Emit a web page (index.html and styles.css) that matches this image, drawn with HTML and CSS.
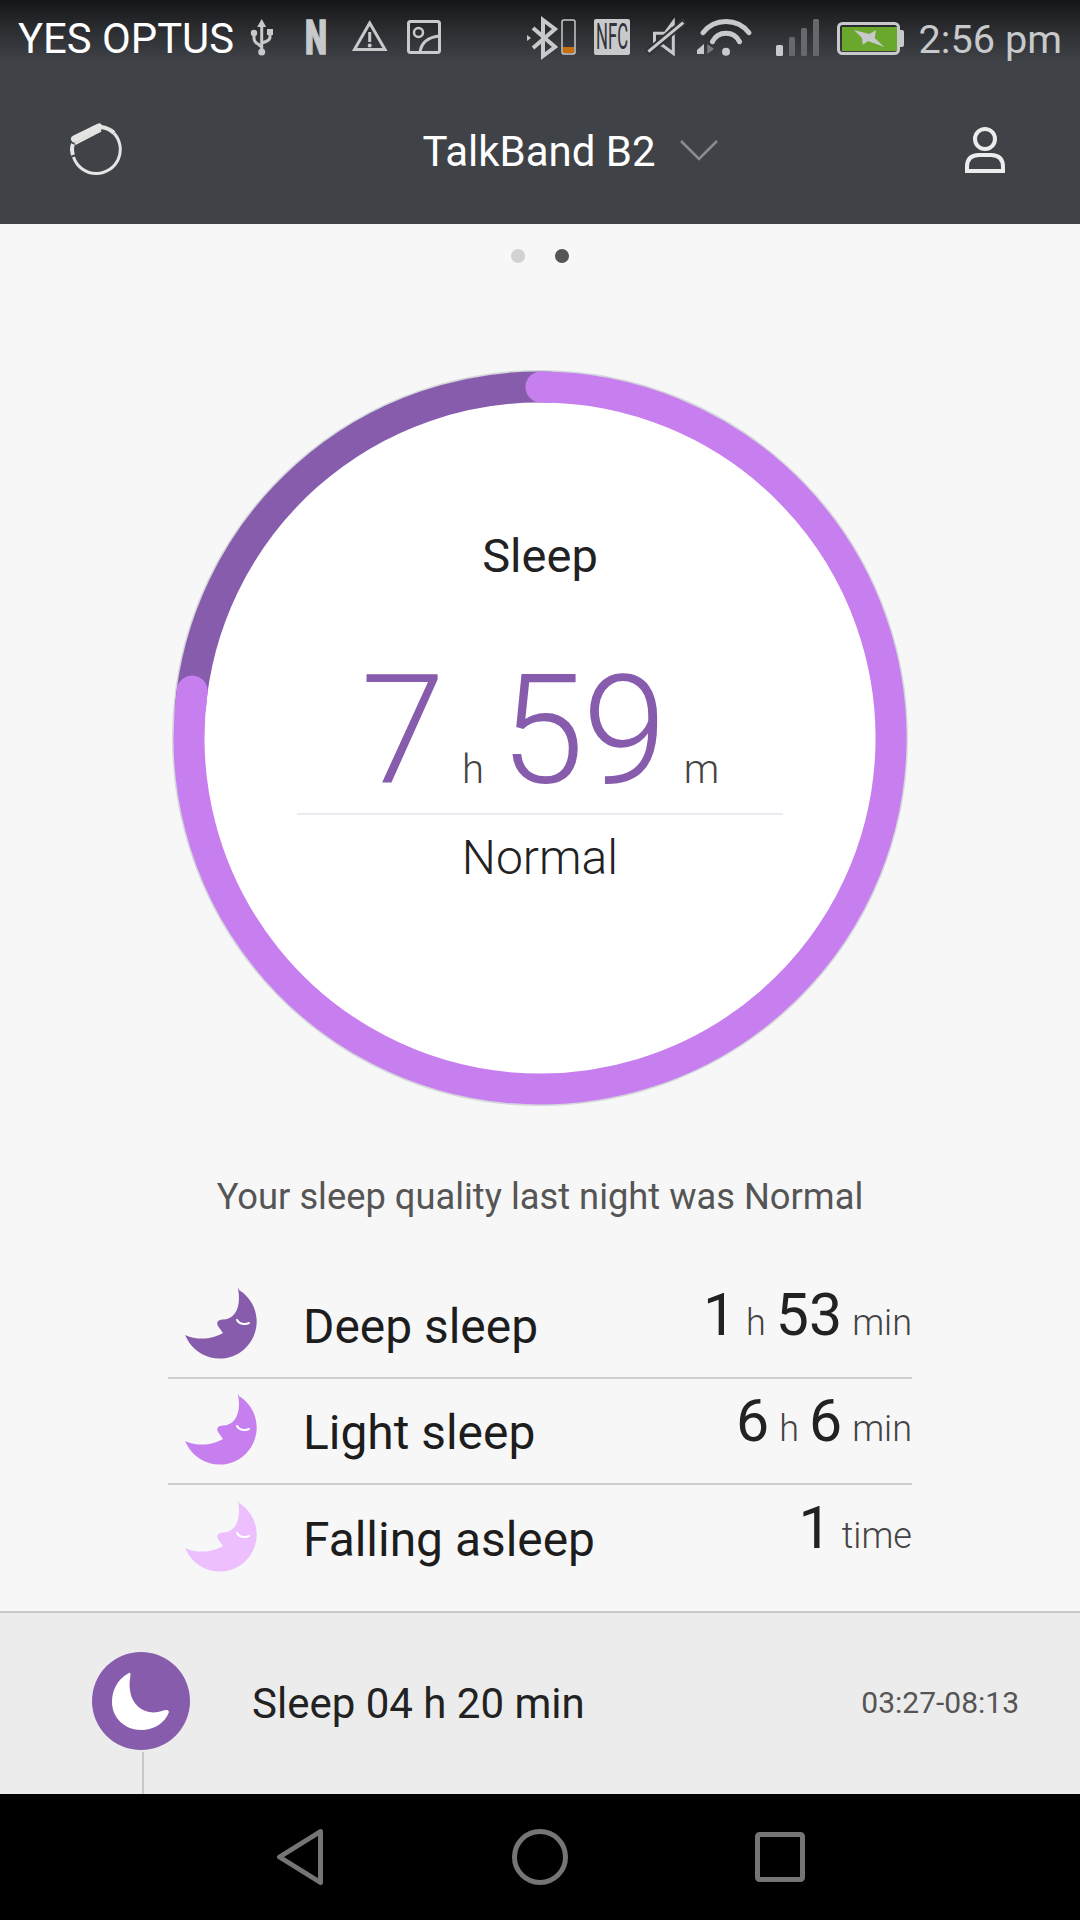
FILE: index.html
```html
<!DOCTYPE html>
<html lang="en">
<head>
<meta charset="utf-8">
<title>TalkBand B2</title>
<link rel="stylesheet" href="styles.css">
</head>
<body>
<div class="screen">
  <header class="header">
    <div class="statusbar">
      <div class="status-left">
        <span class="carrier">YES OPTUS</span>
        <svg class="ic ic-usb" width="22" height="40" viewBox="0 0 22 40"><path class="f" d="M10.700 1l4.500 8h-9z"/><path class="s3" d="M10.700 8v26M3 15v5q0 4 4 6l3.700 3M19 14v5q0 3-4 4.500l-4.300 1.500"/><circle class="f" cx="10.700" cy="34" r="3.500"/><circle class="f" cx="3" cy="15" r="3.200"/><rect class="f" x="16" y="11" width="6" height="6"/></svg>
        <svg class="ic ic-n" width="22" height="40" viewBox="0 0 22 40"><text class="glyph-n" x="0" y="36" textLength="22" lengthAdjust="spacingAndGlyphs">N</text></svg>
        <svg class="ic ic-warn" width="36" height="40" viewBox="0 0 36 40"><path class="s3" d="M17.700 5L2.500 31.500H33z"/><path class="s3" d="M17.700 14v10"/><circle class="f" cx="17.700" cy="27.500" r="2"/></svg>
        <svg class="ic ic-photo" width="34" height="40" viewBox="0 0 34 40"><rect class="s3" x="1.500" y="3.500" width="31" height="31" rx="2"/><circle class="s2" cx="11.500" cy="14.500" r="4.500"/><path class="s3" d="M13 34q2-14 19-16"/></svg>
      </div>
      <div class="status-right">
        <svg class="ic" width="32" height="40" viewBox="0 0 32 40"><path class="s4" d="M6 10l22 19-12 9V2l12 9L6 30"/><path class="f" d="M0 17l4 3-4 3z"/></svg>
        <svg class="ic ic-minibat" width="15" height="40" viewBox="0 0 15 40"><rect class="s1" x="1" y="2" width="13" height="34" rx="2"/><rect class="orange" x="2" y="29" width="11" height="6"/></svg>
        <svg class="ic ic-nfc" width="36" height="40" viewBox="0 0 36 40"><rect class="f" x="0" y="1" width="36" height="36" rx="2"/><text class="glyph-nfc" x="2" y="31" textLength="32" lengthAdjust="spacingAndGlyphs">NFC</text></svg>
        <svg class="ic ic-mute" width="36" height="40" viewBox="0 0 36 40"><path class="s3" d="M25.300 4L17 15.300H6.500V27h7.500l11.300 8.500z"/><path class="mute-cut" d="M-1 35L37 3"/><path class="s3" d="M0.300 33.700L35.300 4.700"/></svg>
        <svg class="ic ic-wifi" width="54" height="40" viewBox="0 0 54 40"><path class="s5" d="M6 14.700A29.300 29.300 0 0 1 52 14.700M15.500 23.700A15 15 0 0 1 42.500 23.700"/><circle class="f" cx="29" cy="33.700" r="4"/><path class="f" d="M7 26v10H0v-4z"/><path class="dim2" d="M10.300 26L17 31l-6.700 5z"/></svg>
        <svg class="ic ic-signal" width="43" height="40" viewBox="0 0 43 40"><rect class="f" x="0" y="27" width="7" height="11" rx="1.500"/><rect class="dim" x="13" y="19" width="6" height="19" rx="1.500"/><rect class="dim" x="25" y="10" width="6" height="28" rx="1.500"/><rect class="dim" x="37" y="1" width="6" height="37" rx="1.500"/></svg>
        <svg class="ic ic-bat" width="68" height="40" viewBox="0 0 68 40"><rect class="s3" x="1.500" y="5.500" width="60" height="30" rx="4"/><rect class="green" x="5" y="9" width="55" height="24"/><path class="f" d="M63 12h2q2 0 2 2v13q0 2-2 2h-2z"/><path class="f" d="M17 12L32.300 16 39 12 37.700 20 47.300 29 31 23 25.700 26.700 25 20z"/></svg>
        <span class="clock">2:56 pm</span>
      </div>
    </div>
    <div class="toolbar">
      <svg class="band-icon" width="52" height="52" viewBox="0 0 52 52"><path class="band-ring" d="M43.850 10.140A24 24 0 0 1 26.300 50.500A24 24 0 0 1 3.500 34"/><path class="band-line" d="M5 21L31 7.500"/><path class="band-top" d="M4.500 16L29 4"/><path class="band-end" d="M3 21Q1 26 3 32M31 4Q39 5 44 10"/></svg>
      <span class="device-name">TalkBand B2</span>
      <div class="toolbar-right">
        <svg class="chevron" width="38" height="22" viewBox="0 0 38 22"><path d="M1 2l18 18L37 2"/></svg>
        <svg class="user-icon" width="40" height="46" viewBox="0 0 40 46"><circle cx="20" cy="12" r="10"/><path d="M2 44v-4q0-12 12-12h12q12 0 12 12v4z"/></svg>
      </div>
    </div>
  </header>

  <main class="main">
    <div class="pager"><i class="dot"></i><i class="dot dot-on"></i></div>

    <section class="gauge">
      <svg class="gauge-art" width="736" height="736" viewBox="0 0 736 736">
        <circle class="g-edge" cx="368" cy="368" r="367"/>
        <path class="g-deep" d="M18.100 340A351 351 0 0 1 380 17.200"/>
        <path class="g-light" d="M369 17A351 351 0 1 1 20.200 321"/>
      </svg>
      <div class="gauge-body">
        <div class="gauge-title">Sleep</div>
        <div class="gauge-value">
          <span class="big">7</span><span class="unit unit-h">h</span><span class="big big-m">59</span><span class="unit unit-m">m</span>
        </div>
        <div class="gauge-state">Normal</div>
      </div>
    </section>

    <p class="quality">Your sleep quality last night was Normal</p>

    <ul class="stats">
      <li class="stat">
        <svg class="moon moon-deep" width="72" height="72" viewBox="0 0 72 72"><path d="M52.700 0.300L54 3A37 37 0 1 1 0.200 48C13 54 28 52 38 46L33 39C31 35 33 33 37 32.500C50 33 57 20 52.700 0.300Z"/><path class="eye" d="M52 33C54 37 60 38 64 36"/></svg>
        <span class="stat-name">Deep sleep</span>
        <span class="stat-val"><b>1</b><em>h</em><b>53</b><em>min</em></span>
      </li>
      <li class="stat">
        <svg class="moon moon-light" width="72" height="72" viewBox="0 0 72 72"><path d="M52.700 0.300L54 3A37 37 0 1 1 0.200 48C13 54 28 52 38 46L33 39C31 35 33 33 37 32.500C50 33 57 20 52.700 0.300Z"/><path class="eye" d="M52 33C54 37 60 38 64 36"/></svg>
        <span class="stat-name">Light sleep</span>
        <span class="stat-val"><b>6</b><em>h</em><b>6</b><em>min</em></span>
      </li>
      <li class="stat">
        <svg class="moon moon-fall" width="72" height="72" viewBox="0 0 72 72"><path d="M52.700 0.300L54 3A37 37 0 1 1 0.200 48C13 54 28 52 38 46L33 39C31 35 33 33 37 32.500C50 33 57 20 52.700 0.300Z"/><path class="eye" d="M52 33C54 37 60 38 64 36"/></svg>
        <span class="stat-name">Falling asleep</span>
        <span class="stat-val"><b>1</b><em>time</em></span>
      </li>
    </ul>
  </main>

  <section class="history">
    <div class="timeline">
      <svg class="avatar" width="98" height="98" viewBox="0 0 98 98"><circle class="av-bg" cx="49" cy="49" r="49"/><path class="av-moon" d="M37 21C24 28 20 40 20 50C20 66 33 78 49 78C62 78 73 71 77 60C76 57 73 58 70 59C55 64 40 55 38 38C37 32 38 27 38.500 23C38.500 21 38 20.500 37 21Z"/></svg>
      <i class="timeline-line"></i>
    </div>
    <span class="history-title">Sleep 04 h 20 min</span>
    <span class="history-time">03:27-08:13</span>
  </section>

  <nav class="navbar">
    <div class="nav-cell"><svg width="46" height="56" viewBox="0 0 46 56"><path d="M43.500 2.500L2.500 28l41 25.500z"/></svg></div>
    <div class="nav-cell"><svg width="56" height="56" viewBox="0 0 56 56"><circle cx="28" cy="28" r="25.500"/></svg></div>
    <div class="nav-cell"><svg width="50" height="50" viewBox="0 0 50 50"><rect x="2.500" y="2.500" width="45" height="45" rx="2"/></svg></div>
  </nav>
</div>
</body>
</html>
```
FILE: styles.css
```css
* { box-sizing: border-box; }
html, body { margin: 0; padding: 0; }
body { font-family: Roboto, "Liberation Sans", sans-serif; background: #f7f7f7; color: #222; }
.screen { width: 1080px; height: 1920px; display: flex; flex-direction: column; overflow: hidden; }

.header { height: 224px; background: linear-gradient(#15161a 0, #2b2d31 30px, #3f4247 62px, #3f4247 100%); flex: none; }
.statusbar { height: 76px; padding: 0 18px; display: flex; justify-content: space-between; align-items: center; }
.status-left, .status-right { display: flex; align-items: center; }
.carrier { font-size: 41.800px; line-height: 40px; color: #fff; width: 216px; white-space: nowrap; font-weight: 400; margin-top: 2px; }
.clock { font-size: 39.700px; line-height: 40px; color: #c8c9cb; margin: 3px 0 0 14px; white-space: nowrap; font-weight: 400; }
.ic { display: block; flex: none; overflow: visible; }
.ic-usb { margin-left: 17px; }
.ic-n { margin-left: 32px; }
.ic-warn { margin-left: 25px; }
.ic-photo { margin-left: 19px; }
.ic-minibat { margin-left: 2px; }
.ic-nfc { margin-left: 18px; }
.ic-mute { margin-left: 18px; }
.ic-wifi { margin-left: 13px; }
.ic-signal { margin-left: 25px; }
.ic-bat { margin-left: 18px; }
.f { fill: #c8c9cb; }
.dim { fill: #66686c; }
.dim2 { fill: #77797d; }
.orange { fill: #c8700f; }
.green { fill: #6aa82d; }
.s1, .s2, .s3, .s4, .s5 { fill: none; stroke: #c8c9cb; }
.s1 { stroke-width: 1.500px; }
.s2 { stroke-width: 2.500px; }
.s3 { stroke-width: 3px; }
.s4 { stroke-width: 4px; }
.s5 { stroke-width: 5px; stroke-linecap: round; }
.mute-cut { stroke: #2f3135; stroke-width: 7px; }
.glyph-n { font-size: 48px; font-weight: 900; fill: #c8c9cb; stroke: #c8c9cb; stroke-width: 1.500px; }
.glyph-nfc { font-size: 36px; font-weight: 400; fill: #2f3135; }

.toolbar { height: 148px; padding: 0 75px 0 70px; display: grid; grid-template-columns: 1fr auto 1fr; align-items: center; }
.band-icon { display: block; margin-top: -2px; }
.band-ring { fill: none; stroke: #e4e4e4; stroke-width: 3px; }
.band-line { fill: none; stroke: #e4e4e4; stroke-width: 2.500px; }
.band-top { fill: none; stroke: #e4e4e4; stroke-width: 7px; stroke-linecap: round; }
.band-end { fill: none; stroke: #e4e4e4; stroke-width: 4px; }
.device-name { font-size: 42px; color: #fff; line-height: 48px; font-weight: 400; margin: 4px 0 0 3px; }
.toolbar-right { display: flex; align-items: center; justify-content: space-between; padding-left: 24px; }
.chevron path { fill: none; stroke: #8a8c8f; stroke-width: 2.500px; }
.user-icon { display: block; }
.user-icon circle, .user-icon path { fill: none; stroke: #ececec; stroke-width: 4px; }

.main { flex: 1; display: flex; flex-direction: column; align-items: center; min-height: 0; }
.pager { height: 64px; width: 100%; display: flex; justify-content: center; align-items: center; gap: 30px; flex: none; }
.dot { width: 14px; height: 14px; border-radius: 50%; background: #d2d2d2; display: block; }
.dot-on { background: #555; }

.gauge { width: 736px; height: 736px; margin-top: 82px; position: relative; flex: none; }
.gauge-art { position: absolute; left: 0; top: 0; display: block; }
.g-edge { fill: #fff; stroke: #d4d8da; stroke-width: 2px; }
.g-deep { fill: none; stroke: #875cad; stroke-width: 31px; }
.g-light { fill: none; stroke: #c77fef; stroke-width: 31px; stroke-linecap: round; }
.gauge-body { position: relative; padding-top: 158px; display: flex; flex-direction: column; align-items: center; }
.gauge-title { font-size: 47px; line-height: 56px; color: #222; }
.gauge-value { width: 486px; height: 153px; margin-top: 78px; border-bottom: 2px solid #e8ecf0; display: flex; justify-content: center; align-items: baseline; line-height: 138px; }
.big { font-size: 152px; font-weight: 300; color: #875cad; letter-spacing: -2px; }
.unit { font-size: 40px; font-weight: 300; color: #444; }
.unit-h { margin-left: 19px; }
.big-m { margin-left: 16px; }
.unit-m { margin-left: 19px; }
.gauge-state { font-size: 48px; line-height: 56px; margin-top: 15px; font-weight: 300; color: #222; }

.quality { font-size: 36.300px; line-height: 40px; color: #555; margin: 71px 0 0; white-space: nowrap; }

.stats { list-style: none; margin: 56px 0 0; padding: 0; width: 744px; }
.stat { height: 106px; display: flex; align-items: center; padding-left: 17px; border-bottom: 2px solid #cfcfcf; }
.stat:last-child { border-bottom: none; }
.moon { display: block; flex: none; margin: 0 46px 5px 0; }
.moon-deep path:first-child { fill: #875cad; }
.moon-light path:first-child { fill: #c77fef; }
.moon-fall path:first-child { fill: #eebfff; }
.eye { fill: none; stroke: #fff; stroke-width: 2px; stroke-linecap: round; }
.stat-name { font-size: 47.900px; color: #1d1d1d; line-height: 56px; margin-top: 4px; }
.stat-val { margin-left: auto; display: flex; align-items: baseline; gap: 10px; line-height: 64px; margin-bottom: 12px; }
.stat-val b { font-size: 59px; font-weight: 400; color: #222; }
.stat-val em { font-size: 36px; font-style: normal; font-weight: 300; color: #444; }

.history { height: 183px; flex: none; background: #ececec; border-top: 2px solid #c8c8c8; display: flex; align-items: flex-start; padding: 0 61px 0 92px; position: relative; }
.timeline { width: 98px; height: 100%; padding-top: 39px; display: flex; flex-direction: column; align-items: center; flex: none; gap: 2px; }
.avatar { display: block; flex: none; }
.av-bg { fill: #875cad; }
.av-moon { fill: #fff; }
.timeline-line { width: 2px; flex: 1; background: #c8c8c8; display: block; margin-left: 4px; }
.history-title { font-size: 42px; line-height: 48px; color: #222; margin: 67px 0 0 62px; }
.history-time { font-size: 30px; line-height: 36px; color: #555; margin: 72px 0 0 auto; }

.navbar { height: 126px; flex: none; background: #000; display: flex; justify-content: center; align-items: center; }
.nav-cell { width: 240px; display: flex; justify-content: center; align-items: center; }
.nav-cell path, .nav-cell circle, .nav-cell rect { fill: none; stroke: #757575; stroke-width: 5px; stroke-linejoin: round; }
```
